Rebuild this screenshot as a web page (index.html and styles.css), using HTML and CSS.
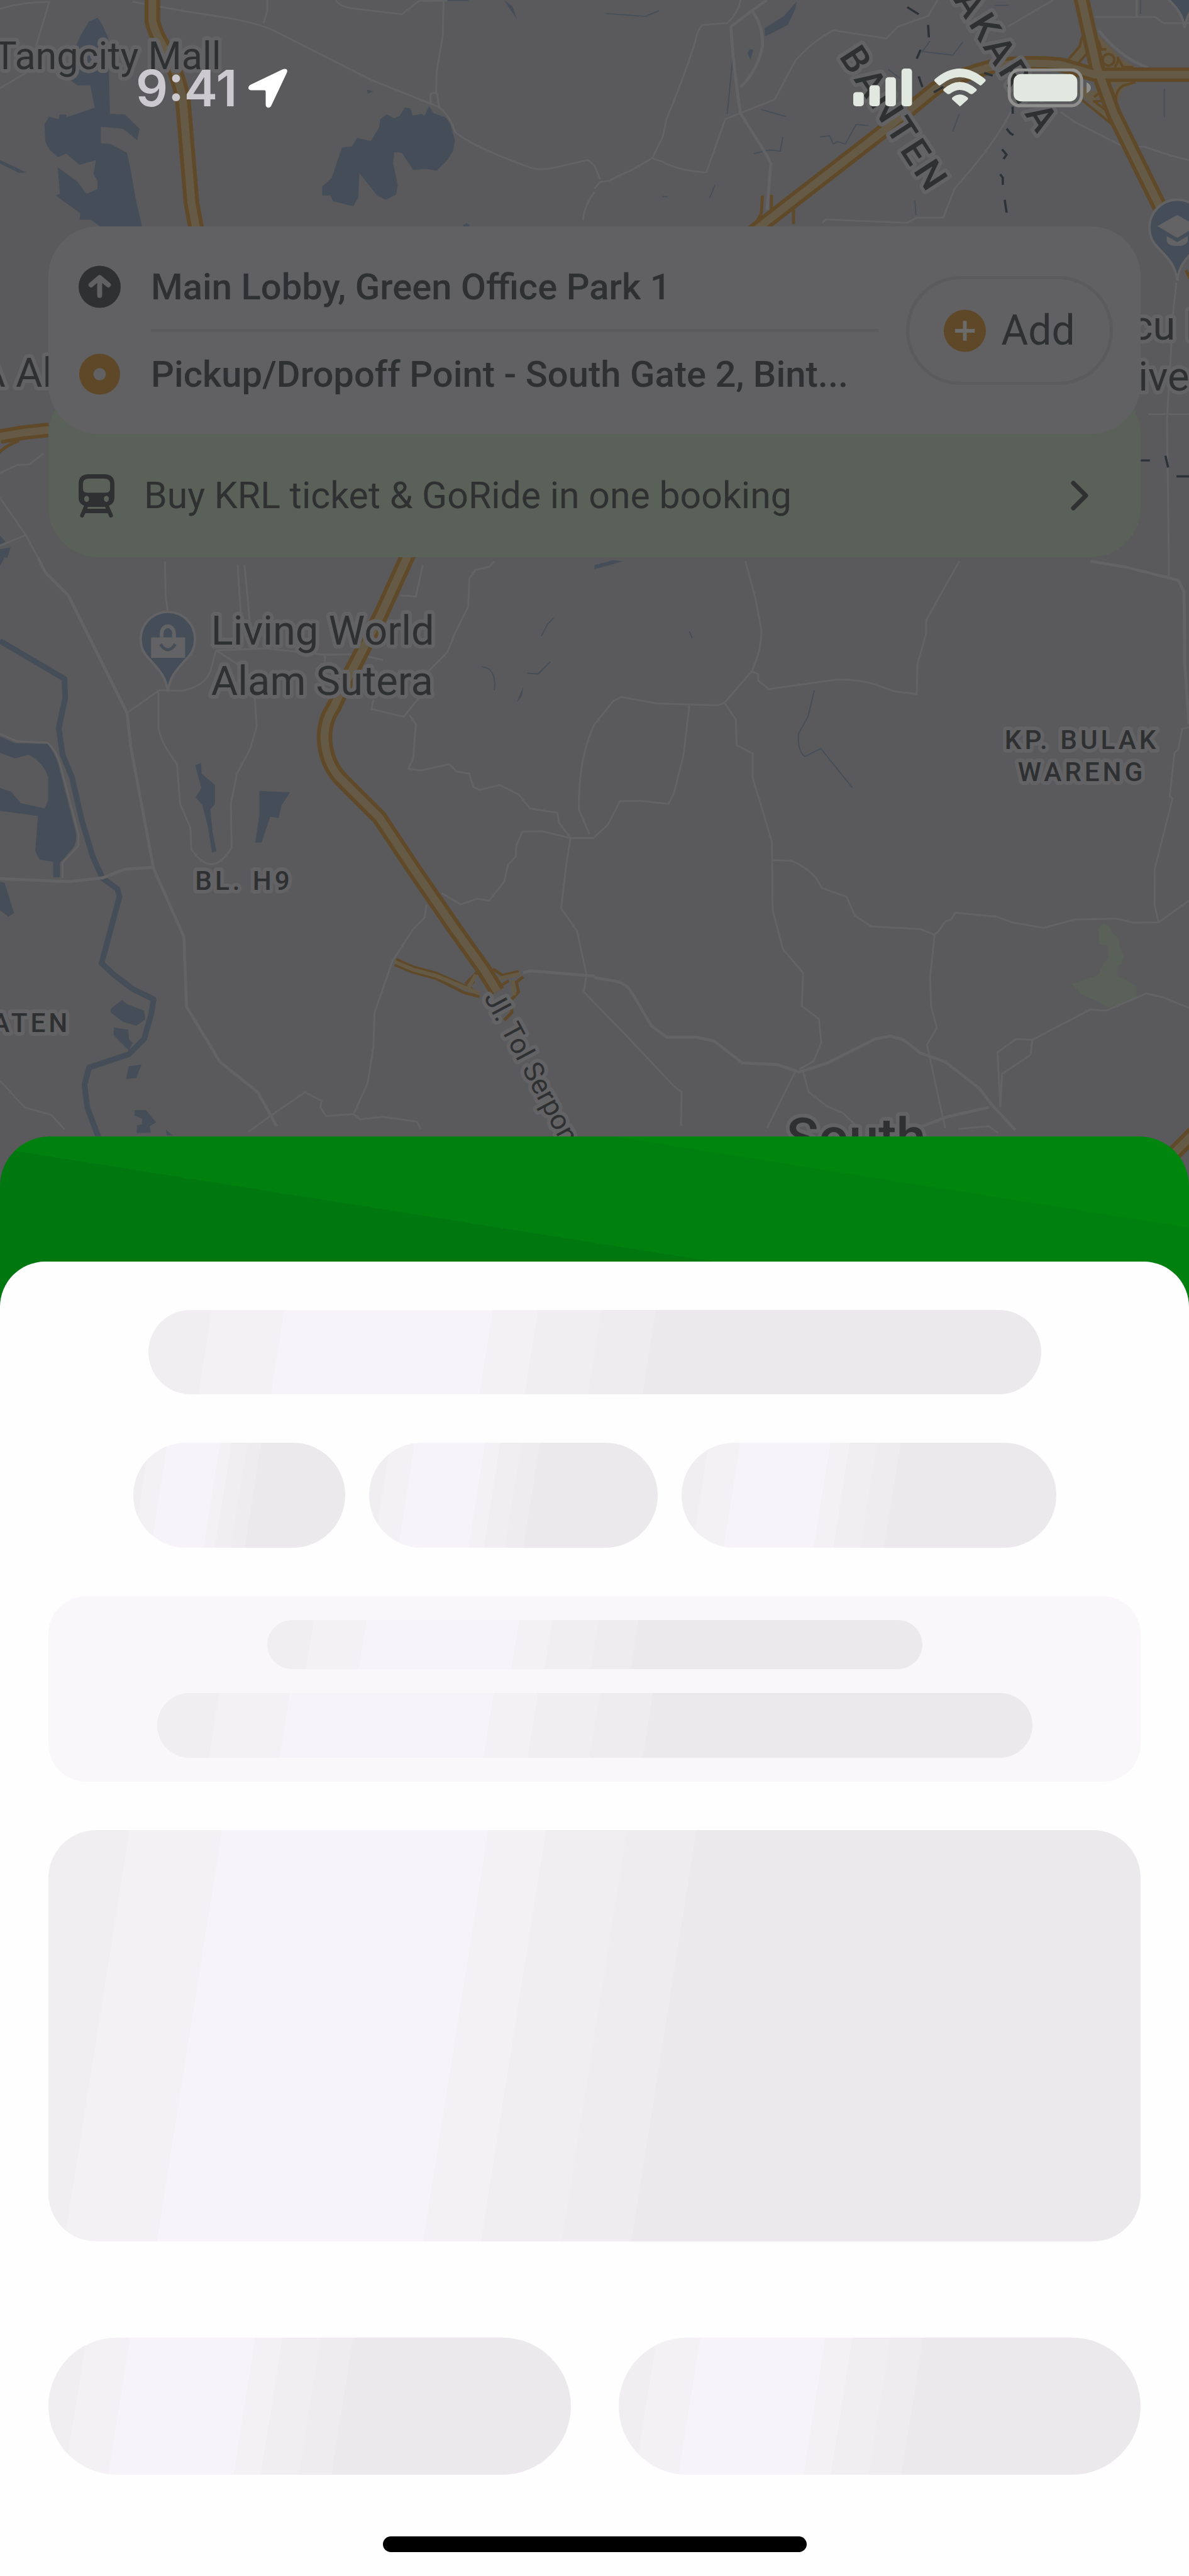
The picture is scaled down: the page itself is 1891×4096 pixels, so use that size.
FILE: index.html
```html
<!DOCTYPE html>
<html lang="en">
    <head>
        <meta charset="utf-8">
        <title>GoRide</title>
        <meta name="viewport" content="width=device-width, initial-scale=1" />
        <link rel="stylesheet" href="styles.css">
    </head>
    <body>
        <main class="screen">

            <svg class="map" viewBox="0 0 1920 1960" preserveAspectRatio="xMidYMin slice" aria-hidden="true">

                <!-- north west -->
                <g transform="scale(.6122 .574)">
                    <path class="map__water" d="M235 60L258 50L270 70L285 105L290 320L330 322L368 362L362 395L325 362L266 357V403L292 405L335 430L345 480L358 560L375 638H265L240 618L210 618L212 600L147 550L158 545L152 470L205 512L228 545L257 532V508L247 490L253 450L210 464L175 432L152 442L130 420L120 400L117 350L130 328L155 335L157 322L175 322L175 330L250 303L238 240L205 240L185 225L200 130L215 95Z" />
                    <path class="map__water" d="M850 525L875 500L902 415L928 412L942 388L978 397L1000 358L1003 335L1020 322L1040 333L1055 325L1068 302L1083 305L1088 325L1112 320L1120 326L1132 298L1143 318L1175 330L1188 350L1200 395L1195 425L1180 450L1152 480L1120 475L1090 478L1060 430L1040 428L1037 460L1049 520L1045 547L1018 562L995 550L948 487L945 555L932 580L878 566L872 550H850Z" />
                    <path class="map__water" d="M0 450L70 485L50 486L0 460ZM968 252L985 257L970 264ZM1222 632l8-4 8 4v8h-16zM1180 0h55v2h-55zM1330 0L1352 18L1364 55L1345 25ZM0 1506l15 18-15 7zM0 1545l28-6-8 29h-20z" />
                    <path class="map__road" d="M0 25Q60 5 130 5L95 130M0 248L100 185M350 5Q500 35 600 50Q680 65 720 85L980 225L1155 300Q1185 320 1200 370Q1240 410 1400 472Q1430 480 1460 472L1550 450L1568 465M695 65L705 30V0M885 0Q900 22 940 25L1060 40L1105 3L1180 2M1170 0L1168 100L1152 200L1150 265M1135 290V265q10-8 18 0l5 35M1568 540Q1540 580 1538 620M0 1330L45 1308L78 1306L115 1275M0 1400L68 1505L100 1568M0 1535L68 1505" />
                    <path class="map__toll" d="M402-10V60Q410 95 428 125Q475 215 483 290L505 570L517 640M0 1228L60 1217L130 1209" />
                    <path class="map__toll-fill" d="M402-10V60Q410 95 428 125Q475 215 483 290L505 570L517 640M-5 1229L60 1217L130 1209" />
                    <path class="map__ramp" d="M-5 1275Q20 1250 50 1240" />
                </g>

                <!-- north east -->
                <g transform="translate(960 0) scale(.6122 .574)">
                    <path class="map__water" d="M533 5L530 25L510 70L470 92L450 102L448 80L500 45ZM404 150l5-12 10 2-8 27z" />
                    <path class="map__stream" d="M365 160L350 320M595 385L620 382L630 405L640 398L662 405L690 350L722 353M420 432L460 422L490 425L497 385M318 520L303 558M178 553h15M845 565L848 605M1440 0V40M1503 250V330M945 155L865 145L885 115M945 155L972 118M30 38L135 46L170 30M440 308L505 328M1055 15h38M962 320L945 370M775 195L805 220" />
                    <path class="map__road" d="M385 0Q380 35 350 65L285 70Q270 85 265 120Q235 220 190 335L180 385L152 445L95 480Q70 490 40 508L15 512L0 530M0 465L15 505M152 445L180 455Q220 480 295 485L345 335L385 318L475 280L500 230L530 170Q570 120 630 85L770 108L800 75L880 45L905 0M1210 0L1090 75M1105 300Q1060 400 950 530L920 612H850L825 627L610 617L600 628M1230 315L1270 345L1400 415L1450 412Q1520 440 1568 450M1320 48H1480L1500 65H1568M1430 0V45M1535 795L1527 870L1510 1180L1515 1568M1460 1165H1568" />
                    <path class="map__road map__road--wide" d="M455 0L415 30L360 75Q365 180 385 318L455 438L465 460L455 590M415 30Q445 70 443 130Q430 200 385 245M1330 85Q1390 165 1460 190" />
                    <path class="map__ramp" d="M443 550L440 600L420 640M525 590V630M467 548V590" />
                </g>

                <!-- interchange -->
                <g transform="translate(1600 0) scale(.3333)">
                    <path class="map__apron" d="M443 175L430 225L362 305L480 340L720 335L640 290L530 180L500 160ZM420 440L590 605L630 580L615 490L640 430L740 385L560 370Z" />
                    <path class="map__ground" d="M428 308L466 262L478 312ZM505 488L530 470L552 520ZM582 408h30l-18 22zM470 400h35l8 40h-30zM632 300l10 20h-12z" />
                    <path class="map__slip" d="M443 175L430 225L362 305M470 255L420 310M520 195L535 240L560 238M600 325Q620 300 615 280L640 325H690M440 482L590 605M555 385L590 440M700 398L640 415Q600 440 608 500M500 470L520 455M545 490L500 490L560 535" />
                    <circle class="map__slip" cx="570" cy="290" r="28" />
                </g>
                <g transform="translate(960 0) scale(.6122 .574)">
                    <path class="map__toll" d="M415 655L760 370L900 248Q950 215 1050 187Q1130 172 1230 182L1320 210H1580M1283-10L1325 190L1370 320L1495 590" />
                    <path class="map__toll-fill" d="M415 655L760 370L900 248Q950 215 1050 187Q1130 172 1230 182L1320 210H1580M1283-10L1325 190L1370 320L1495 590" />
                    <path class="map__ramp" d="M1560 760L1572 785" />
                    <path class="map__rail" d="M825 20L855 40M880 70L882 105M860 140L850 165M855 215L865 245M1103 300V320M1087 362L1097 375L1105 380M1075 420l12 15-8 12M1070 490L1077 500V520M1082 562L1087 598M1028 205l22 8M895 260l25-16M1441 1295H1465M1506 1282L1513 1315M1535 1340H1568" />
                </g>

                <!-- south west -->
                <g transform="translate(0 900) scale(.6122)">
                    <path class="map__road" d="M435 10L437 100L443 150M335 410L420 350L480 352Q540 340 555 300L570 245L700 240L860 257L940 255L1010 270M857 257V275M627 20L635 150M645 20L660 180M418 355V450Q425 490 467 545L475 650L502 712L505 770Q560 850 611 765L609 650L625 570L660 505L677 445L672 370M570 245L640 290M1115 20L1097 103L1055 100M1305 10L1290 25L1255 32L1238 55L1235 130L1200 200L1180 250L1130 300L1105 370L1065 420L980 400L985 375M1080 415L1097 440L1090 530L1077 557L1110 562L1185 545L1205 565L1238 570L1248 605L1265 613L1318 600L1368 625L1398 662L1470 673L1475 700L1505 740H1568M1505 740L1495 800L1480 925L1522 985L1547 1100L1540 1145L1568 1175M1505 740L1430 722L1378 723L1362 760L1360 790L1340 810L1330 855L1290 905L1258 900L1215 915L1165 885M1125 915L1120 950L1090 980L1035 1065L988 1200L985 1290L970 1385L933 1468L860 1473L845 1450L848 1433L805 1410L710 1475L655 1515M933 1468L950 1482L1010 1475L1100 1488L1110 1508M1568 440Q1525 530 1527 665L1555 730M0 465L45 485L125 488Q150 510 160 550L207 730V760L165 805V845M0 1380L65 1450L135 1470L170 1508" />
                    <path class="map__stream map__stream--river" d="M0 220L170 320L172 370L155 450L165 520L190 580L215 690L245 790L270 845L310 875L315 895L268 1070L300 1100L350 1138L405 1165L400 1200L380 1270L340 1310L235 1345L223 1390L230 1450L262 1535" />
                    <path class="map__road map__road--wide" d="M100 0L120 40L180 100L335 410L345 500L405 820L485 1000L492 1185L580 1330L680 1410L730 1500M1380 1095L1400 1090L1568 1104M0 847L180 855L270 845L330 822L405 817" />
                    <path class="map__water" d="M0 472L40 490L125 492Q150 520 160 570L200 725Q205 755 185 775L158 805V843H140V803L105 797L93 775L100 682L0 668V608L30 618L55 648L118 662L127 640V580Q115 540 75 520L40 530L0 515ZM0 855L12 858L37 938L22 947L0 930ZM515 548l15-6 2 28 35 30v50l-12 15 6 60 10 50-12 3-10-65-15-60-18-20 15-25zM684 616L765 619L742 655L735 687L713 684L690 752L673 752L684 680ZM292 1190L322 1167L335 1178L380 1195L383 1218L360 1235L325 1225L292 1200ZM300 1240L338 1245L340 1270L350 1280L340 1300L320 1280L300 1260ZM340 1342L373 1337L360 1373L332 1375ZM355 1457L385 1457L412 1490L395 1500L398 1517L360 1518L362 1497L375 1495L375 1480L355 1472ZM437 1508l18 16h-15zM0 0h12l-12 22zM1380 342l-18 41 15-18z" />
                    <path class="map__stream" d="M1460 160L1445 175L1428 207M1270 288Q1310 290 1304 350M1390 305L1420 307L1452 275" />
                    <path class="map__ramp" d="M1045 1060L1090 1080L1150 1096L1240 1136M1041 1074L1090 1094L1150 1110L1225 1148L1265 1158M1228 1125L1260 1092M1250 1145l-12-14 12-14M1300 1085L1325 1102L1368 1092M1380 1106L1362 1120L1368 1145L1350 1165M1350 1170V1200L1330 1220M1320 1130l22-14" />
                    <path class="map__ramp-fill" d="M1041 1066L1090 1087L1150 1103L1265 1150M1255 1100L1236 1135M1310 1112L1372 1098M1352 1115L1356 1155" />
                    <path class="map__toll" d="M1078-10L1005 150L930 295Q900 350 880 395Q855 430 856 480Q860 540 895 580L1000 685L1090 820L1200 980L1275 1085L1312 1145" />
                    <path class="map__toll-fill" d="M1078-10L1005 150L930 295Q900 350 880 395Q855 430 856 480Q860 540 895 580L1000 685L1090 820L1200 980L1275 1085L1312 1145" />
                </g>

                <!-- south east -->
                <g transform="translate(960 900) scale(.6122)">
                    <path class="map__park" d="M1345 965L1360 975L1365 990L1383 1005L1385 1030L1397 1050L1390 1072L1380 1080L1378 1105L1400 1112L1430 1132V1160L1395 1175L1355 1187L1325 1170L1285 1153L1258 1125L1330 1100L1345 1065L1355 1060V1025L1330 1020V975Z" />
                    <path class="map__road" d="M398 10L425 110L440 190Q442 240 415 300L343 383L325 390L165 385L70 368L50 378L0 440M250 390L235 520L210 620L195 650L120 642L67 643L35 705L0 737M343 383L373 428L375 495L417 517V580L468 750L470 930L497 1033L550 1095L547 1183L592 1217L598 1280L578 1328L540 1350M415 300L432 308V325L460 347L640 322Q700 322 740 335L790 353L850 360L852 280L875 200V165L962 10M472 798L518 800Q550 810 585 845L600 872L665 895L687 945L730 973L860 980L897 995L908 985L925 960L940 955L952 937L1060 947L1100 962L1185 977L1265 955L1375 952L1420 963L1488 962L1568 905M1488 962L1477 915L1478 820L1525 635L1517 630L1530 515L1540 505L1550 452L1568 448M1515 0V50M897 995L885 1110L888 1185L903 1240L877 1285L925 1505M530 1355L455 1505M550 1355L565 1410L615 1448L655 1465L690 1498M1070 1450L1075 1362L1150 1312L1155 1272L1112 1270L1063 1305L1070 1440M1155 1272L1308 1192L1350 1195L1455 1150L1500 1160L1568 1188M0 1175L85 1262L210 1395L230 1410L228 1500M960 1507L1040 1500L1065 1518" />
                    <path class="map__road map__road--wide" d="M1308 10L1400 25L1540 60L1555 90L1557 280L1568 440M0 1108L60 1118Q85 1125 100 1150L150 1235L190 1265L270 1265L315 1275L390 1333L480 1337L540 1357L615 1333L740 1270L780 1262L815 1272L860 1307L925 1330L1015 1400L1045 1440L1110 1510M865 1500L930 1475L1040 1450" />
                    <path class="map__stream" d="M580 350L563 420L538 465Q535 510 555 525L597 504L680 607M250 195l8 18" />
                    <path class="map__water" d="M0 20L50 7L75 10L0 31Z" />
                    <path class="map__toll" d="M1600 1500L1460 1640" />
                    <path class="map__toll-fill" d="M1600 1500L1460 1640" />
                </g>

                <!-- place pins -->
                <g class="map__pin">
                    <path d="M271 1117C268 1092 257 1082 241 1064A44 44 0 1 1 301 1064C285 1082 274 1092 271 1117Z" />
                    <path class="map__glyph" d="M244 1029H299V1062H244Z" />
                    <path class="map__handle" d="M261 1030V1023A10 12 0 0 1 281 1023V1030" />
                    <path class="map__smile" d="M259 1040Q271 1058 283 1040" />
                </g>
                <g class="map__pin">
                    <path d="M1901 453C1898 428 1887 418 1870 400A45 45 0 1 1 1932 400C1915 418 1904 428 1901 453Z" />
                    <path class="map__glyph" d="M1869 365L1901 347L1933 365L1901 384ZM1884 381L1901 391L1918 381V390Q1914 397 1905 397H1897Q1888 397 1884 390Z" />
                </g>
                <path class="map__pin" d="M1913 45C1910 24 1902 14 1882-6H1944C1924 14 1916 24 1913 45Z" />

                <!-- labels -->
                <text class="map__label map__label--mall" x="357" y="112" text-anchor="end">Tangcity Mall</text>
                <g class="map__label">
                    <text x="-34" y="624">A Al</text>
                    <text x="341" y="1041">Living World</text>
                    <text x="341" y="1122">Alam Sutera</text>
                    <text x="1827" y="548">cu B</text>
                    <text x="1838" y="631">ive</text>
                </g>
                <g class="map__label map__label--area">
                    <text x="315" y="1437">BL. H9</text>
                    <text x="114" y="1666" text-anchor="end">BATEN</text>
                    <text x="1747" y="1209" text-anchor="middle">KP. BULAK</text>
                    <text x="1747" y="1261" text-anchor="middle">WARENG</text>
                </g>
                <g class="map__label map__label--region">
                    <text transform="translate(1354 91) rotate(57)">BANTEN</text>
                    <text transform="translate(1678 222) rotate(58)" text-anchor="end">JAKARTA</text>
                </g>
                <text class="map__label map__label--road" transform="translate(781 1610) rotate(62)">Jl. Tol Serpong</text>
                <text class="map__label map__label--city" x="1270" y="1866">South</text>
            </svg>

            <header class="status">
                <div class="status__left">
                    <time class="status__time">9:41</time>
                    <svg class="status__arrow" viewBox="0 0 64 64">
                        <path d="M61 1Q64 2 62 7L37 60Q35 64 31 63Q28 62 28 58V37Q28 35 26 35H5Q1 35 0 32Q0 28 4 26L56 1Q59 0 61 1Z" />
                    </svg>
                </div>
                <svg class="status__icons" viewBox="0 0 384 62">
                    <rect x="0" y="38" width="17" height="23" rx="5" />
                    <rect x="26" y="27" width="17" height="34" rx="5" />
                    <rect x="52" y="14" width="17" height="47" rx="5" />
                    <rect x="78" y="0" width="17" height="61" rx="5" />
                    <path d="M132 17Q172-17 213 17Q215 19 213 21L207 27Q205 28 203 26Q172 2 142 26Q140 28 138 27L132 21Q130 19 132 17Z" />
                    <path d="M146 33Q172 10 199 33Q200 34 199 36L193 41Q191 42 189 41Q172 28 156 41Q154 42 152 41L146 36Q145 34 146 33Z" />
                    <path d="M160 47Q172 37 185 47Q186 48 185 50L174 60Q172 62 171 60L160 50Q159 48 160 47Z" />
                    <rect class="status__cell" x="252" y="2" width="117" height="58" rx="17" />
                    <rect x="259" y="9" width="103" height="44" rx="12" />
                    <path class="status__cap" d="M377 22Q384 26 384 31T377 40Z" />
                </svg>
            </header>

            <section class="booking">
                <div class="route">
                    <div class="route__stops">
                        <div class="route__stop">
                            <svg class="route__icon" viewBox="0 0 68 68">
                                <circle cx="34" cy="34" r="34" fill="#2e3032" />
                                <path d="M34 48V22M20 31L34 19L48 31" fill="none" stroke="#616163" stroke-width="8" stroke-linecap="round" stroke-linejoin="round" />
                            </svg>
                            <p class="route__name">Main Lobby, Green Office Park 1</p>
                        </div>
                        <hr class="route__line">
                        <div class="route__stop">
                            <svg class="route__icon" viewBox="0 0 68 68">
                                <circle cx="34" cy="34" r="33" fill="#5f4828" />
                                <circle cx="34" cy="34" r="10" fill="#616163" />
                            </svg>
                            <p class="route__name">Pickup/Dropoff Point - South Gate 2, Bint...</p>
                        </div>
                    </div>
                    <button class="add" type="button">
                        <svg class="route__icon" viewBox="0 0 68 68">
                            <circle cx="34" cy="34" r="34" fill="#5f4828" />
                            <path d="M34 18V50M18 34H50" stroke="#6b6b6b" stroke-width="6" />
                        </svg>
                        Add
                    </button>
                </div>
                <a class="promo" href="#">
                    <svg class="promo__train" viewBox="0 0 58 70">
                        <path fill-rule="evenodd" d="M16 0H42Q58 0 58 16V38Q58 48 49 51L55 65Q57 69 53 70Q50 71 49 67L47 63H11L9 67Q8 71 5 70Q1 69 3 65L9 51Q0 48 0 38V16Q0 0 16 0ZM17 7Q7 7 7 16V23Q7 30 14 30H44Q51 30 51 23V16Q51 7 41 7ZM13 35A4 5 0 1 0 13 45A4 5 0 1 0 13 35ZM45 35A4 5 0 1 0 45 45A4 5 0 1 0 45 35ZM15 53L14 56H44L43 53Z" />
                    </svg>
                    <span class="promo__text">Buy KRL ticket &amp; GoRide in one booking</span>
                    <svg class="promo__chevron" viewBox="0 0 28 48">
                        <path d="M4 4L24 24L4 44" />
                    </svg>
                </a>
            </section>

            <section class="sheet" aria-busy="true">
                <div class="sheet__body">
                    <div class="bone bone--title"></div>
                    <div class="chips">
                        <div class="bone bone--chip-s"></div>
                        <div class="bone bone--chip-m"></div>
                        <div class="bone bone--chip-l"></div>
                    </div>
                    <div class="note">
                        <div class="bone bone--note-s"></div>
                        <div class="bone bone--note-l"></div>
                    </div>
                    <div class="bone bone--card"></div>
                    <div class="actions">
                        <div class="bone bone--action"></div>
                        <div class="bone bone--action"></div>
                    </div>
                    <div class="home"></div>
                </div>
            </section>

        </main>
    </body>
</html>
```
FILE: styles.css
```css
* {
    padding: 0;
    margin: 0;
    box-sizing: border-box;
}

body{
    font-family: Roboto, "Liberation Sans", sans-serif;
    color: #2e3032;
    background-color: #5a5a5c;
}

.screen{
    display: flex;
    flex-direction: column;
    min-height: 100vh;
    position: relative;
    overflow: hidden;
}

/* map */

.map{
    position: absolute;
    top: 0;
    left: 0;
    width: 100%;
}

.map__water{
    fill: #454e58;
}

.map__park{
    fill: #5a6158;
}

.map__ground{
    fill: #5a5a5c;
}

.map__apron{
    fill: #645a46;
}

.map__road, .map__stream, .map__rail, .map__toll, .map__toll-fill, .map__ramp, .map__ramp-fill, .map__slip{
    fill: none;
    stroke-linejoin: round;
}

.map__road{
    stroke: #636365;
    stroke-width: 5px;
}

.map__road--wide{
    stroke-width: 8px;
}

.map__stream{
    stroke: #454e58;
    stroke-width: 3px;
}

.map__stream--river{
    stroke-width: 15px;
}

.map__rail{
    stroke: #2b3238;
    stroke-width: 6px;
}

.map__toll{
    stroke: #5f4928;
    stroke-width: 41px;
}

.map__toll-fill{
    stroke: #645a46;
    stroke-width: 21px;
}

.map__ramp{
    stroke: #5f4928;
    stroke-width: 8px;
}

.map__slip{
    stroke: #5f4928;
    stroke-width: 12px;
}

.map__ramp-fill{
    stroke: #645a46;
    stroke-width: 10px;
}

.map__pin{
    fill: #454e58;
    stroke: #636365;
    stroke-width: 4px;
}

.map__glyph{
    fill: #636365;
    stroke: none;
}

.map__handle{
    fill: none;
    stroke-width: 6px;
}

.map__smile{
    fill: none;
    stroke: #454e58;
    stroke-width: 5px;
}

.map__label{
    font-size: 66px;
    fill: #2e3032;
    stroke: #636365;
    stroke-width: 12px;
    stroke-linejoin: round;
    paint-order: stroke;
}

.map__label--mall{
    font-size: 62px;
}

.map__label--area{
    font-size: 43px;
    font-weight: 500;
    letter-spacing: 5px;
}

.map__label--region{
    font-size: 60px;
    font-weight: 500;
    letter-spacing: 6px;
}

.map__label--road{
    font-size: 45px;
}

.map__label--city{
    font-size: 86px;
    font-weight: 500;
}

/* status bar */

.status{
    display: flex;
    justify-content: space-between;
    align-items: center;
    position: relative;
    padding: 108px 156px 0 216px;
}

.status__left{
    display: flex;
    align-items: center;
    gap: 18px;
}

.status__time{
    font-family: Inter, Roboto, sans-serif;
    font-size: 80px;
    font-weight: 600;
    line-height: 64px;
    color: #ccc9cf;
}

.status__arrow{
    width: 63px;
    fill: #fff;
}

.status__icons{
    width: 378px;
    fill: #e0e8e0;
}

.status__cell{
    fill: none;
    stroke: #8f908d;
    stroke-width: 5px;
}

.status__cap{
    fill: #8f908d;
}

/* route card */

.booking{
    flex: 1;
    position: relative;
    margin: 188px 77px 0;
}

.route{
    display: flex;
    align-items: center;
    gap: 44px;
    position: relative;
    z-index: 1;
    padding: 62px 44px 61px 48px;
    border-radius: 79px;
    background-color: #616163;
}

.route__stops{
    flex: 1;
    min-width: 0;
}

.route__stop{
    display: flex;
    align-items: center;
    gap: 48px;
}

.route__icon{
    width: 67px;
    height: 68px;
    flex-shrink: 0;
}

.route__name{
    font-size: 58px;
    font-weight: 500;
    line-height: 68px;
    white-space: nowrap;
    overflow: hidden;
    text-overflow: ellipsis;
}

.route__line{
    height: 5px;
    margin: 33px 0 33px 115px;
    border: 0;
    background-color: #5b5b5d;
}

.add{
    display: flex;
    justify-content: center;
    align-items: center;
    gap: 24px;
    width: 329px;
    height: 173px;
    border: solid 5px #5b5b5d;
    border-radius: 87px;
    background: none;
    color: inherit;
    font-family: inherit;
    font-size: 66px;
}

.promo{
    display: flex;
    align-items: center;
    gap: 47px;
    margin-top: -79px;
    padding: 143px 83px 63px 48px;
    border-radius: 79px;
    background-color: #5a6158;
    color: inherit;
    text-decoration: none;
}

.promo__train{
    width: 57px;
    flex-shrink: 0;
    fill: #2e3032;
}

.promo__text{
    flex: 1;
    font-size: 59px;
    line-height: 68px;
}

.promo__chevron{
    width: 28px;
    fill: none;
    stroke: #2e3032;
    stroke-width: 7px;
    stroke-linecap: round;
    stroke-linejoin: round;
}

/* bottom sheet, still loading */

.sheet{
    position: relative;
    padding-top: 199px;
    border-radius: 79px 79px 0 0;
    background: linear-gradient(9deg, #00770f 45%, #00800f 45%, #00800f 75%, #00860f 75%) 0 0 / 100% 280px no-repeat;
}

.sheet__body{
    display: flex;
    flex-direction: column;
    align-items: center;
    gap: 77px;
    padding: 77px 77px 38px;
    border-radius: 72px 72px 0 0;
    background-color: #fefefe;
}

.bone{
    border-radius: 109px;
    background: linear-gradient(99deg, #f0eef1 7%, #f3f1f4 7%, #f3f1f4 15%, #f6f4f8 15%, #f6f4f8 38%, #f3f1f4 38%, #f3f1f4 43%, #f0eef1 43%, #f0eef1 50%, #eeecef 50%, #eeecef 56%, #ebe9ec 56%);
}

.bone--title{
    width: 1420px;
    max-width: 100%;
    height: 134px;
}

.chips{
    display: flex;
    justify-content: center;
    gap: 38px;
    width: 100%;
}

.bone--chip-s, .bone--chip-m, .bone--chip-l{
    height: 167px;
}

.bone--chip-s{
    width: 337px;
}

.bone--chip-m{
    width: 459px;
}

.bone--chip-l{
    width: 596px;
}

.note{
    display: flex;
    flex-direction: column;
    align-items: center;
    gap: 38px;
    width: 100%;
    padding: 38px;
    border-radius: 60px;
    background-color: #f9f7fa;
}

.bone--note-s{
    width: 1042px;
    max-width: 100%;
    height: 78px;
}

.bone--note-l{
    width: 1392px;
    max-width: 100%;
    height: 103px;
}

.bone--card{
    width: 100%;
    height: 654px;
    border-radius: 76px;
}

.actions{
    display: flex;
    gap: 76px;
    width: 100%;
    margin: 76px 0 21px;
}

.bone--action{
    flex: 1;
    height: 218px;
}

.home{
    width: 674px;
    height: 25px;
    border-radius: 13px;
    background-color: #000;
}
```
